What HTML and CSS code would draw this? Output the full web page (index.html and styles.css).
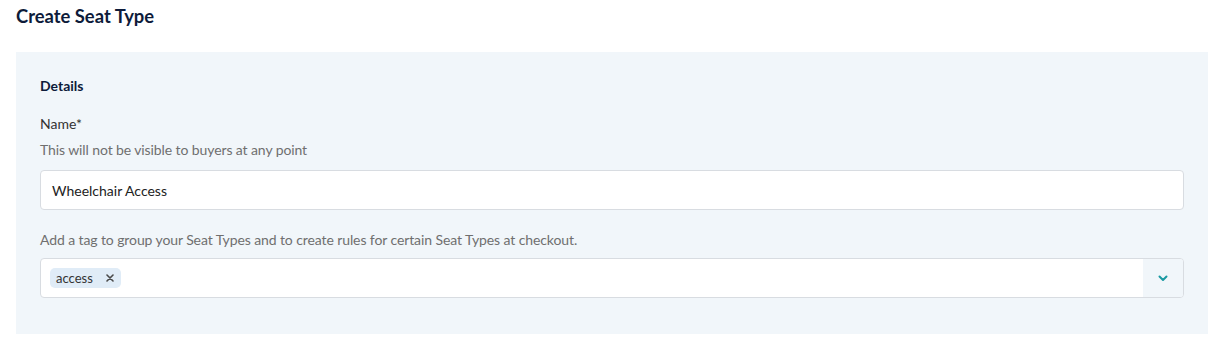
FILE: index.html
```html
<!DOCTYPE html>
<html>
<head>
<meta charset="utf-8">
<link rel="stylesheet" href="styles.css">
</head>
<body>
<div class="page">
  <h1 class="title">Create Seat Type</h1>
  <section class="panel">
    <h2 class="section-title">Details</h2>
    <div class="field">
      <div class="label">Name*</div>
      <div class="hint">This will not be visible to buyers at any point</div>
      <div class="input">Wheelchair Access</div>
    </div>
    <div class="field tags-field">
      <div class="hint">Add a tag to group your Seat Types and to create rules for certain Seat Types at checkout.</div>
      <div class="select">
        <div class="select-values">
          <span class="chip">access<svg class="chip-x" width="8" height="8" viewBox="0 0 8 8"><path d="M1 1 L7 7 M7 1 L1 7" fill="none" stroke="#4a4a4a" stroke-width="1.6" stroke-linecap="round"/></svg></span>
        </div>
        <div class="select-toggle">
          <svg width="10" height="7" viewBox="0 0 10 7"><path d="M1.5 1.5 L5 5 L8.5 1.5" fill="none" stroke="#1b9aa2" stroke-width="2" stroke-linecap="round" stroke-linejoin="round"/></svg>
        </div>
      </div>
    </div>
  </section>
</div>
</body>
</html>
```
FILE: styles.css
```css
* { box-sizing: border-box; }
body {
  margin: 0;
  font-family: Lato, "Liberation Sans", sans-serif;
  color: #333;
  background: #fff;
}
.page {
  padding: 4px 16px 0 16px;
}
.title {
  margin: 0;
  font-size: 18.4px;
  line-height: 24px;
  font-weight: 700;
  color: #0d1b3a;
}
.panel {
  margin-top: 24px;
  background: #f1f6fa;
  padding: 24px 24px 36px 24px;
}
.section-title {
  margin: 0;
  font-size: 14px;
  line-height: 20px;
  font-weight: 700;
  color: #0d1b3a;
}
.field {
  margin-top: 18px;
}
.label {
  font-size: 14px;
  line-height: 20px;
  color: #333;
}
.hint {
  margin-top: 6px;
  font-size: 14px;
  line-height: 20px;
  letter-spacing: -0.1px;
  color: #6f6f6f;
}
.input {
  margin-top: 10px;
  height: 40px;
  background: #fff;
  border: 1px solid #d8dce1;
  border-radius: 4px;
  padding: 0 11px;
  display: flex;
  align-items: center;
  font-size: 14px;
  color: #222;
}
.tags-field {
  margin-top: 20px;
}
.tags-field .hint {
  margin-top: 0;
}
.select {
  margin-top: 8px;
  height: 40px;
  background: #fff;
  border: 1px solid #d8dce1;
  border-radius: 4px;
  display: flex;
  overflow: hidden;
}
.select-values {
  flex: 1;
  display: flex;
  align-items: center;
  padding-left: 9px;
}
.chip {
  display: inline-flex;
  align-items: center;
  height: 20px;
  padding: 0 7px 0 6px;
  background: #e0ecf7;
  border-radius: 5px;
  font-size: 13px;
  color: #333;
}
.chip-x {
  margin-left: 13px;
}
.select-toggle {
  width: 40px;
  background: #f1f6fa;
  display: flex;
  align-items: center;
  justify-content: center;
}
```
